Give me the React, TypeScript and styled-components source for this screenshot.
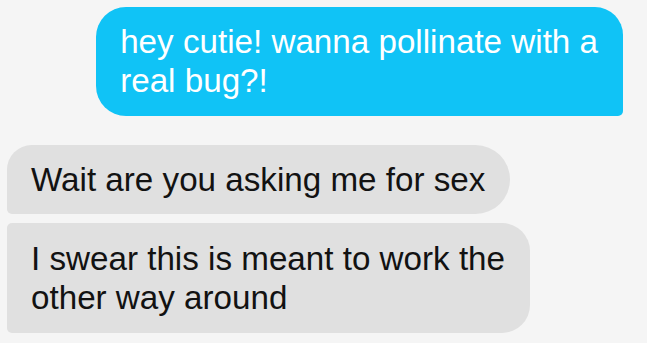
import React from "react";
import styled, { createGlobalStyle } from "styled-components";

const Global = createGlobalStyle`
  html, body {
    margin: 0;
    padding: 0;
    background: #f5f5f5;
  }
  body {
    width: 647px;
    height: 343px;
    overflow: hidden;
    font-family: "Liberation Sans", Arial, Helvetica, sans-serif;
  }
`;

const Thread = styled.div`
  display: flex;
  flex-direction: column;
  align-items: flex-start;
  padding: 7px 24px 0 7px;
  box-sizing: border-box;
  width: 647px;
  height: 343px;
  background: #f5f5f5;
`;

const Group = styled.div<{ $side: "left" | "right"; $gap?: number }>`
  display: flex;
  flex-direction: column;
  align-items: ${(p) => (p.$side === "right" ? "flex-end" : "flex-start")};
  align-self: ${(p) => (p.$side === "right" ? "flex-end" : "flex-start")};
  gap: 9px;
  margin-top: ${(p) => p.$gap ?? 0}px;
`;

const Bubble = styled.div<{ $out?: boolean; $radius: string }>`
  box-sizing: border-box;
  padding: 15px 25px 15px 24px;
  border-radius: ${(p) => p.$radius};
  background: ${(p) => (p.$out ? "#10c3f6" : "#e0e0e0")};
  color: ${(p) => (p.$out ? "#ffffff" : "#121212")};
  font-size: 33.2px;
  line-height: 39px;
  white-space: nowrap;
`;

export default function App() {
  return (
    <>
      <Global />
      <Thread>
        <Group $side="right">
          <Bubble $out $radius="30px 28px 5px 30px" style={{ paddingBottom: 16 }}>
            hey cutie! wanna pollinate with a
            <br />
            real bug?!
          </Bubble>
        </Group>
        <Group $side="left" $gap={29}>
          <Bubble $radius="25px 35px 35px 5px">Wait are you asking me for sex</Bubble>
          <Bubble $radius="5px 28px 28px 5px" style={{ paddingTop: 16, paddingBottom: 16 }}>
            I swear this is meant to work the
            <br />
            other way around
          </Bubble>
        </Group>
      </Thread>
    </>
  );
}
